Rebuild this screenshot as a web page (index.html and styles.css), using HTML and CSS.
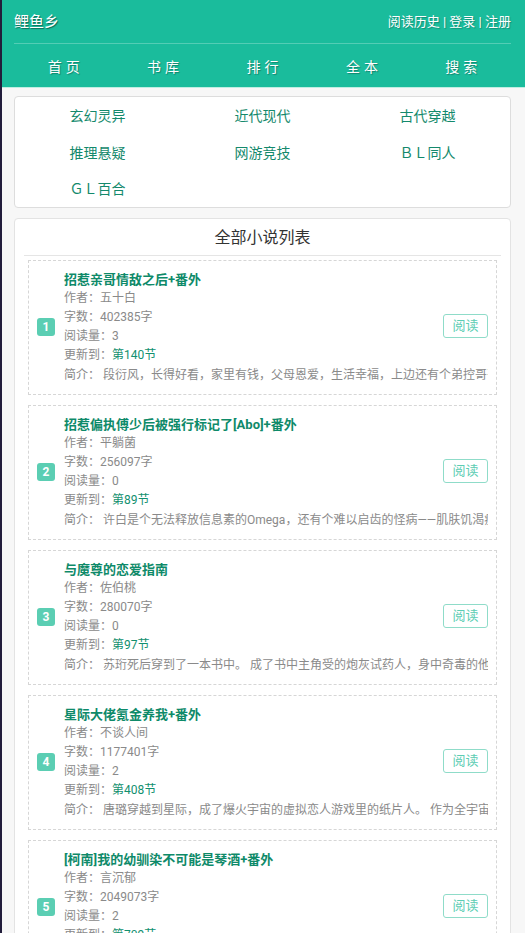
FILE: index.html
```html
<!DOCTYPE html>
<html lang="zh">
<head>
<meta charset="utf-8">
<title>鲤鱼乡</title>
<link rel="stylesheet" href="styles.css">
</head>
<body>
<header class="header">
  <div class="topbar">
    <span class="logo">鲤鱼乡</span>
    <span class="userlinks"><a>阅读历史</a> | <a>登录</a> | <a>注册</a></span>
  </div>
  <nav class="nav">
    <a>首页</a><a>书库</a><a>排行</a><a>全本</a><a>搜索</a>
  </nav>
</header>

<main class="main">
  <section class="cats">
    <a>玄幻灵异</a><a>近代现代</a><a>古代穿越</a>
    <a>推理悬疑</a><a>网游竞技</a><a>ＢＬ同人</a>
    <a>ＧＬ百合</a>
  </section>

  <section class="list">
    <h2 class="list-title">全部小说列表</h2>
    <ul class="books">
      <li class="book">
        <span class="num">1</span>
        <div class="info">
          <a class="bt">招惹亲哥情敌之后+番外</a>
          <p class="meta">作者：五十白</p>
          <p class="meta">字数：402385字</p>
          <p class="meta">阅读量：3</p>
          <p class="meta">更新到：<a class="chap">第140节</a></p>
          <p class="meta intro">简介： 段衍风，长得好看，家里有钱，父母恩爱，生活幸福，上边还有个弟控哥哥。</p>
        </div>
        <a class="read">阅读</a>
      </li>
      <li class="book">
        <span class="num">2</span>
        <div class="info">
          <a class="bt">招惹偏执傅少后被强行标记了[Abo]+番外</a>
          <p class="meta">作者：平躺菌</p>
          <p class="meta">字数：256097字</p>
          <p class="meta">阅读量：0</p>
          <p class="meta">更新到：<a class="chap">第89节</a></p>
          <p class="meta intro">简介： 许白是个无法释放信息素的Omega，还有个难以启齿的怪病——肌肤饥渴症。</p>
        </div>
        <a class="read">阅读</a>
      </li>
      <li class="book">
        <span class="num">3</span>
        <div class="info">
          <a class="bt">与魔尊的恋爱指南</a>
          <p class="meta">作者：佐伯桃</p>
          <p class="meta">字数：280070字</p>
          <p class="meta">阅读量：0</p>
          <p class="meta">更新到：<a class="chap">第97节</a></p>
          <p class="meta intro">简介： 苏珩死后穿到了一本书中。 成了书中主角受的炮灰试药人，身中奇毒的他。</p>
        </div>
        <a class="read">阅读</a>
      </li>
      <li class="book">
        <span class="num">4</span>
        <div class="info">
          <a class="bt">星际大佬氪金养我+番外</a>
          <p class="meta">作者：不谈人间</p>
          <p class="meta">字数：1177401字</p>
          <p class="meta">阅读量：2</p>
          <p class="meta">更新到：<a class="chap">第408节</a></p>
          <p class="meta intro">简介： 唐璐穿越到星际，成了爆火宇宙的虚拟恋人游戏里的纸片人。 作为全宇宙最受欢迎的。</p>
        </div>
        <a class="read">阅读</a>
      </li>
      <li class="book">
        <span class="num">5</span>
        <div class="info">
          <a class="bt">[柯南]我的幼驯染不可能是琴酒+番外</a>
          <p class="meta">作者：言沉郁</p>
          <p class="meta">字数：2049073字</p>
          <p class="meta">阅读量：2</p>
          <p class="meta">更新到：<a class="chap">第709节</a></p>
          <p class="meta intro">简介： 诸伏景光和琴酒是幼驯染，从小一起长大。</p>
        </div>
        <a class="read">阅读</a>
      </li>
    </ul>
  </section>
</main>
</body>
</html>
```

FILE: styles.css
```css
* { box-sizing: border-box; }

html, body {
  margin: 0;
  padding: 0;
}

body {
  background: #f7f7f7;
  border-left: 2px solid #221d3b;
  min-height: 933px;
  font-family: Roboto, "Noto Sans CJK SC", sans-serif;
  color: #333;
}

a { text-decoration: none; cursor: pointer; }

.header {
  background: #1abc9c;
  border-bottom: 1px solid #bfeee2;
  padding: 0 14px 0 12px;
}

.topbar {
  height: 44px;
  display: flex;
  align-items: center;
  justify-content: space-between;
  border-bottom: 1px solid rgba(255, 255, 255, 0.25);
}

.logo {
  font-size: 15px;
  color: #fff;
  text-shadow: 1px 1px 1px rgba(0, 0, 0, 0.45);
  margin-top: -2px;
}

.userlinks {
  font-size: 13px;
  color: #fff;
  text-shadow: 1px 1px 1px rgba(0, 0, 0, 0.25);
  margin-top: -2px;
}

.userlinks a { color: #fff; }

.nav {
  height: 43px;
  display: grid;
  grid-template-columns: repeat(5, 1fr);
  align-items: center;
}

.nav a {
  text-align: center;
  color: #fff;
  font-size: 14px;
  letter-spacing: 4px;
  text-indent: 4px;
  text-shadow: 1px 1px 1px rgba(0, 0, 0, 0.3);
}

.main {
  padding: 8px 14px 0 12px;
}

.cats {
  background: #fff;
  border: 1px solid #ddd;
  border-radius: 4px;
  display: grid;
  grid-template-columns: repeat(3, 1fr);
  grid-auto-rows: 36.6px;
  align-items: center;
}

.cats a {
  text-align: center;
  color: #14896c;
  font-size: 14px;
}

.list {
  margin-top: 10px;
  background: #fff;
  border: 1px solid #e3e3e3;
  border-radius: 4px;
  padding: 0 9px;
}

.list-title {
  margin: 0;
  height: 37px;
  line-height: 37px;
  text-align: center;
  font-size: 16px;
  font-weight: normal;
  color: #333;
  border-bottom: 1px solid #e5e5e5;
}

.books {
  list-style: none;
  margin: 0;
  padding: 4px 4px 0;
}

.book {
  border: 1px dashed #d6d6d6;
  margin-bottom: 10px;
  padding: 9px 8px 9px 8px;
  display: flex;
  align-items: center;
  gap: 9px;
}

.num {
  flex: none;
  width: 18px;
  height: 18px;
  border-radius: 3px;
  background: #5bceb3;
  color: #fff;
  font-size: 12px;
  font-weight: bold;
  line-height: 18px;
  text-align: center;
}

.info {
  flex: 1;
  min-width: 0;
  display: flex;
  flex-direction: column;
  margin-right: -54px;
}

.bt {
  font-size: 13px;
  font-weight: bold;
  color: #0e8a69;
  line-height: 19px;
  white-space: nowrap;
}

.meta {
  margin: 0;
  font-size: 12px;
  line-height: 19px;
  color: #8a8a8a;
  white-space: nowrap;
}

.chap { color: #12906f; }

.intro {
  overflow: hidden;
  padding-top: 1px;
}

.read {
  flex: none;
  position: relative;
  margin-top: -2px;
  width: 45px;
  height: 24px;
  border: 1px solid #8fdcc9;
  border-radius: 3px;
  background: #fff;
  color: #5ccdb3;
  font-size: 13px;
  line-height: 22px;
  text-align: center;
}
```
